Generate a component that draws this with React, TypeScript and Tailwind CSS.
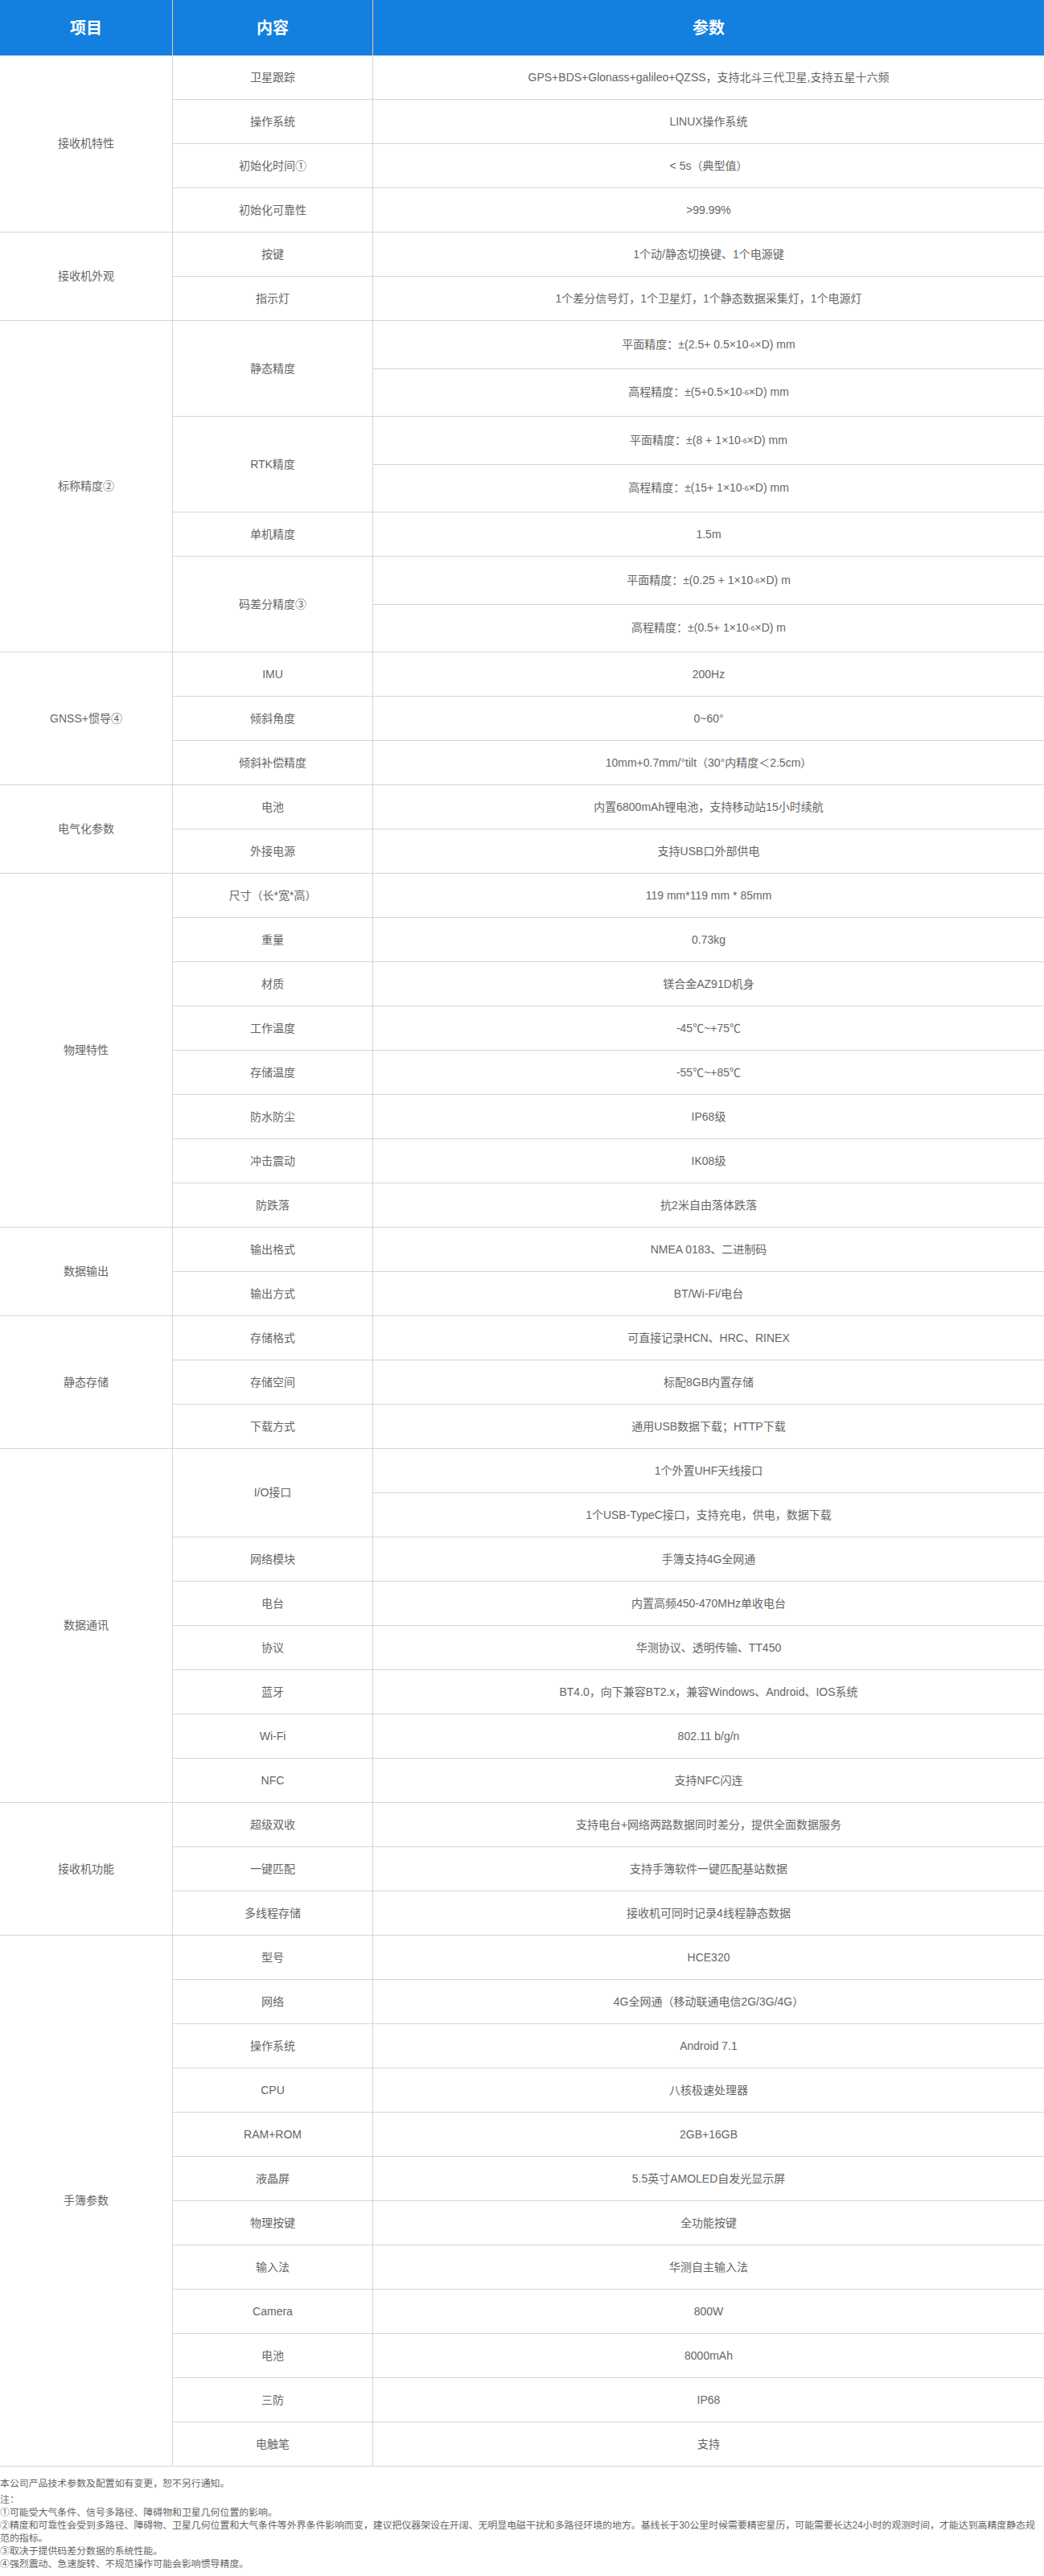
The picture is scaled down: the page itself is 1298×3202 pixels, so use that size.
import type { ReactNode } from "react";

type Item = { label: ReactNode; values: ReactNode[]; tall?: boolean };
type Group = { title: ReactNode; items: Item[] };

const Sup = () => <sup className="text-[9px] relative -top-[1px]">-6</sup>;

const groups: Group[] = [
  {
    title: "接收机特性",
    items: [
      { label: "卫星跟踪", values: ["GPS+BDS+Glonass+galileo+QZSS，支持北斗三代卫星,支持五星十六频"] },
      { label: "操作系统", values: ["LINUX操作系统"] },
      { label: "初始化时间①", values: ["< 5s（典型值）"] },
      { label: "初始化可靠性", values: [">99.99%"] },
    ],
  },
  {
    title: "接收机外观",
    items: [
      { label: "按键", values: ["1个动/静态切换键、1个电源键"] },
      { label: "指示灯", values: ["1个差分信号灯，1个卫星灯，1个静态数据采集灯，1个电源灯"] },
    ],
  },
  {
    title: "标称精度②",
    items: [
      {
        label: "静态精度",
        tall: true,
        values: [
          <>平面精度：±(2.5+ 0.5×10<Sup />×D) mm</>,
          <>高程精度：±(5+0.5×10<Sup />×D) mm</>,
        ],
      },
      {
        label: "RTK精度",
        tall: true,
        values: [
          <>平面精度：±(8 + 1×10<Sup />×D) mm</>,
          <>高程精度：±(15+ 1×10<Sup />×D) mm</>,
        ],
      },
      { label: "单机精度", values: ["1.5m"] },
      {
        label: "码差分精度③",
        tall: true,
        values: [
          <>平面精度：±(0.25 + 1×10<Sup />×D) m</>,
          <>高程精度：±(0.5+ 1×10<Sup />×D) m</>,
        ],
      },
    ],
  },
  {
    title: "GNSS+惯导④",
    items: [
      { label: "IMU", values: ["200Hz"] },
      { label: "倾斜角度", values: ["0~60°"] },
      { label: "倾斜补偿精度", values: ["10mm+0.7mm/°tilt（30°内精度＜2.5cm）"] },
    ],
  },
  {
    title: "电气化参数",
    items: [
      { label: "电池", values: ["内置6800mAh锂电池，支持移动站15小时续航"] },
      { label: "外接电源", values: ["支持USB口外部供电"] },
    ],
  },
  {
    title: "物理特性",
    items: [
      { label: "尺寸（长*宽*高）", values: ["119 mm*119 mm * 85mm"] },
      { label: "重量", values: ["0.73kg"] },
      { label: "材质", values: ["镁合金AZ91D机身"] },
      { label: "工作温度", values: ["-45℃~+75℃"] },
      { label: "存储温度", values: ["-55℃~+85℃"] },
      { label: "防水防尘", values: ["IP68级"] },
      { label: "冲击震动", values: ["IK08级"] },
      { label: "防跌落", values: ["抗2米自由落体跌落"] },
    ],
  },
  {
    title: "数据输出",
    items: [
      { label: "输出格式", values: ["NMEA 0183、二进制码"] },
      { label: "输出方式", values: ["BT/Wi-Fi/电台"] },
    ],
  },
  {
    title: "静态存储",
    items: [
      { label: "存储格式", values: ["可直接记录HCN、HRC、RINEX"] },
      { label: "存储空间", values: ["标配8GB内置存储"] },
      { label: "下载方式", values: ["通用USB数据下载；HTTP下载"] },
    ],
  },
  {
    title: "数据通讯",
    items: [
      { label: "I/O接口", values: ["1个外置UHF天线接口", "1个USB-TypeC接口，支持充电，供电，数据下载"] },
      { label: "网络模块", values: ["手簿支持4G全网通"] },
      { label: "电台", values: ["内置高频450-470MHz单收电台"] },
      { label: "协议", values: ["华测协议、透明传输、TT450"] },
      { label: "蓝牙", values: ["BT4.0，向下兼容BT2.x，兼容Windows、Android、IOS系统"] },
      { label: "Wi-Fi", values: ["802.11 b/g/n"] },
      { label: "NFC", values: ["支持NFC闪连"] },
    ],
  },
  {
    title: "接收机功能",
    items: [
      { label: "超级双收", values: ["支持电台+网络两路数据同时差分，提供全面数据服务"] },
      { label: "一键匹配", values: ["支持手簿软件一键匹配基站数据"] },
      { label: "多线程存储", values: ["接收机可同时记录4线程静态数据"] },
    ],
  },
  {
    title: "手簿参数",
    items: [
      { label: "型号", values: ["HCE320"] },
      { label: "网络", values: ["4G全网通（移动联通电信2G/3G/4G）"] },
      { label: "操作系统", values: ["Android 7.1"] },
      { label: "CPU", values: ["八核极速处理器"] },
      { label: "RAM+ROM", values: ["2GB+16GB"] },
      { label: "液晶屏", values: ["5.5英寸AMOLED自发光显示屏"] },
      { label: "物理按键", values: ["全功能按键"] },
      { label: "输入法", values: ["华测自主输入法"] },
      { label: "Camera", values: ["800W"] },
      { label: "电池", values: ["8000mAh"] },
      { label: "三防", values: ["IP68"] },
      { label: "电触笔", values: ["支持"] },
    ],
  },
];

const SpecGroup = ({ group }: { group: Group }) => (
  <div className="flex">
    <div className="w-[215px] shrink-0 flex items-center justify-center border-r border-b border-[#d6d6d6]">
      {group.title}
    </div>
    <div className="flex-1 flex flex-col">
      {group.items.map((item, i) => (
        <div key={i} className="flex">
          <div className="w-[249px] shrink-0 flex items-center justify-center border-r border-b border-[#d6d6d6]">
            {item.label}
          </div>
          <div className="flex-1 flex flex-col">
            {item.values.map((v, j) => (
              <div
                key={j}
                className={
                  item.tall
                    ? "h-[59.5px] flex items-center justify-center border-b border-[#d6d6d6]"
                    : "h-[55px] flex items-center justify-center border-b border-[#d6d6d6]"
                }
              >
                <span>{v}</span>
              </div>
            ))}
          </div>
        </div>
      ))}
    </div>
  </div>
);

export default function App() {
  return (
    <div className="w-[1298px] bg-white text-[#666666] text-[14px] font-['Liberation_Sans','Noto_Sans_CJK_SC',sans-serif]">
      {/* header */}
      <div className="flex h-[69px] bg-[#1380e0] text-white text-[20px] font-bold">
        <div className="w-[215px] shrink-0 flex items-center justify-center border-r border-[#f4cd88]">项目</div>
        <div className="w-[249px] shrink-0 flex items-center justify-center border-r border-[#f4cd88]">内容</div>
        <div className="flex-1 flex items-center justify-center">参数</div>
      </div>

      {groups.map((g, i) => (
        <SpecGroup key={i} group={g} />
      ))}

      {/* notes */}
      <div className="text-[11.9px] leading-[16px] pb-[7px]">
        <p className="mt-[13px]">本公司产品技术参数及配置如有变更，恕不另行通知。</p>
        <div className="mt-[4px]">
          <p>注：</p>
          <p>①可能受大气条件、信号多路径、障碍物和卫星几何位置的影响。</p>
          <p>
            ②精度和可靠性会受到多路径、障碍物、卫星几何位置和大气条件等外界条件影响而变，建议把仪器架设在开阔、无明显电磁干扰和多路径环境的地方。基线长于30公里时候需要精密星历，可能需要长达24小时的观测时间，才能达到高精度静态规范的指标。
          </p>
          <p>③取决于提供码差分数据的系统性能。</p>
          <p>④强烈震动、急速旋转、不规范操作可能会影响惯导精度。</p>
        </div>
      </div>
    </div>
  );
}
